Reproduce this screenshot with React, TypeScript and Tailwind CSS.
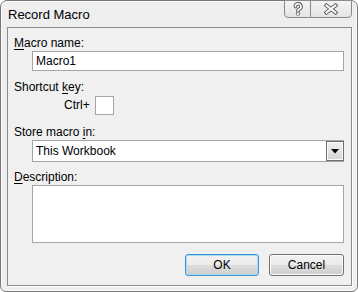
import React from "react";

function HelpGlyph() {
  return (
    <svg width="14" height="14" viewBox="-7 -7 14 14">
      <g fill="none" strokeLinecap="round" strokeLinejoin="round">
        <path d="M-2.6,-2.4 A2.8,2.8 0 1 1 1.2,0.2 L0,1.2 V2" stroke="#5c5c5c" strokeWidth="3.6" />
        <circle cx="0" cy="4.6" r="0.4" stroke="#5c5c5c" strokeWidth="3.4" />
        <path d="M-2.6,-2.4 A2.8,2.8 0 1 1 1.2,0.2 L0,1.2 V2" stroke="#ffffff" strokeWidth="1.6" />
        <circle cx="0" cy="4.6" r="0.4" stroke="#ffffff" strokeWidth="1.4" />
      </g>
    </svg>
  );
}

function CloseGlyph() {
  return (
    <svg width="16" height="12" viewBox="-8 -6 16 12">
      <g fill="none" strokeLinecap="square">
        <path d="M-4.5,-3.5 L4.5,3.5 M4.5,-3.5 L-4.5,3.5" stroke="#5c5c5c" strokeWidth="4" />
        <path d="M-4.5,-3.5 L4.5,3.5 M4.5,-3.5 L-4.5,3.5" stroke="#ffffff" strokeWidth="2" />
      </g>
    </svg>
  );
}

export default function App() {
  const font = "font-['Liberation_Sans',Arial,sans-serif]";
  return (
    <div className={`w-[358px] h-[292px] bg-white ${font} text-black`}>
      <div className="w-[358px] h-[292px] flex flex-col rounded-t-[7px] rounded-b-[6px] border border-[#777777] bg-[#eeeeee] shadow-[inset_0_0_0_1px_#fafafa]">
        {/* title bar */}
        <div className="h-[26px] flex items-start justify-between">
          <div className="pl-[7px] pt-[6px] text-[13px] leading-[16px]">Record Macro</div>
          <div className="flex mr-[5px] -mt-px">
            <div className="w-[27px] h-[18px] flex items-center justify-center border border-[#8a8a8a] rounded-bl-[4px] bg-[linear-gradient(to_bottom,#f4f4f4,#e4e4e4)]">
              <HelpGlyph />
            </div>
            <div className="w-[42px] h-[18px] -ml-px flex items-center justify-center border border-[#8a8a8a] rounded-br-[4px] bg-[linear-gradient(to_bottom,#f4f4f4,#e4e4e4)]">
              <CloseGlyph />
            </div>
          </div>
        </div>
        {/* client */}
        <div className="ml-[6px] w-[345px] h-[259px] border border-[#8c8c8c] bg-[#f0f0f0] shadow-[1px_1px_0_#ffffff] flex flex-col text-[12px] leading-[15px]">
          <div className="pl-[6px] pt-[8px]">
            <span className="underline underline-offset-2">M</span>acro name:
          </div>
          <div className="ml-[24px] w-[312px] h-[20px] border border-[#a5a5a5] bg-white pl-[3px] flex items-center">
            Macro1
          </div>
          <div className="pl-[6px] mt-[9px]">
            Shortcut <span className="underline underline-offset-2">k</span>ey:
          </div>
          <div className="flex items-center mt-px ml-[56px]">
            <span>Ctrl+</span>
            <div className="ml-[5px] w-[19px] h-[19px] border border-[#a5a5a5] bg-white" />
          </div>
          <div className="pl-[6px] mt-[10px]">
            Store macro <span className="underline underline-offset-2">i</span>n:
          </div>
          <div className="ml-[24px] w-[312px] h-[22px] border border-[#a5a5a5] bg-white flex items-center justify-between">
            <span className="pl-[3px]">This Workbook</span>
            <div className="w-[18px] h-[20px] -mr-px border border-[#6e6e6e] bg-[linear-gradient(to_bottom,#f2f2f2,#d4d4d4)] shadow-[inset_0_0_0_1px_#fbfbfb] flex items-center justify-center">
              <svg width="8" height="5" viewBox="0 0 8 5">
                <path d="M0,0 H8 L4,4.5 Z" fill="#000000" />
              </svg>
            </div>
          </div>
          <div className="pl-[6px] mt-[8px]">
            <span className="underline underline-offset-2">D</span>escription:
          </div>
          <div className="ml-[24px] w-[312px] h-[58px] border border-[#a5a5a5] bg-white" />
          <div className="flex justify-end gap-[10px] mr-[7px] mt-[11px]">
            <button className="w-[74px] h-[22px] rounded-[3px] border border-[#3d95d8] shadow-[inset_0_0_0_1px_#a6dcf8] bg-[linear-gradient(to_bottom,#f2f2f2_0%,#ebebeb_50%,#dddddd_50%,#cfcfcf_100%)] text-[12px] leading-[15px]">
              OK
            </button>
            <button className="w-[75px] h-[22px] rounded-[3px] border border-[#707070] shadow-[inset_0_0_0_1px_#fcfcfc] bg-[linear-gradient(to_bottom,#f2f2f2_0%,#ebebeb_50%,#dddddd_50%,#cfcfcf_100%)] text-[12px] leading-[15px]">
              Cancel
            </button>
          </div>
        </div>
      </div>
    </div>
  );
}
